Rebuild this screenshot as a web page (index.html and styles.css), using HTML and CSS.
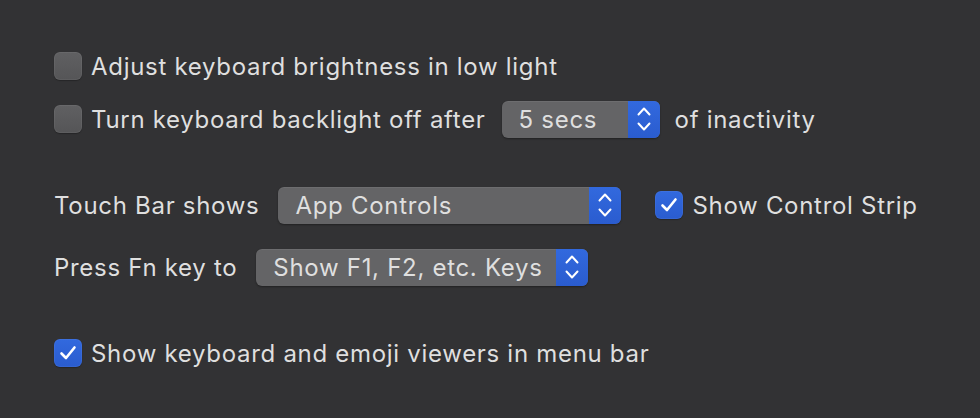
FILE: index.html
```html
<!DOCTYPE html>
<html>
<head>
    <title>Keyboard</title>
    <link rel="stylesheet" href="styles.css">
</head>
<body>
    <div class="pane">
        <div class="group">
            <div class="row">
                <span class="check"></span>
                <span class="label">Adjust keyboard brightness in low light</span>
            </div>
            <div class="row row-gap">
                <span class="check"></span>
                <span class="label">Turn keyboard backlight off after</span>
                <div class="popup popup-secs">
                    <span class="popup-text">5 secs</span>
                    <span class="popup-arrows">
                        <svg width="14" height="26" viewBox="0 0 14 26"><path d="M1.5 8.5 L7 2.5 L12.5 8.5 M1.5 17.5 L7 23.5 L12.5 17.5" fill="none" stroke="#fff" stroke-width="2" stroke-linecap="round" stroke-linejoin="round"/></svg>
                    </span>
                </div>
                <span class="label">of inactivity</span>
            </div>
        </div>

        <div class="group">
            <div class="row">
                <span class="label">Touch Bar shows</span>
                <div class="popup popup-bar">
                    <span class="popup-text">App Controls</span>
                    <span class="popup-arrows">
                        <svg width="14" height="26" viewBox="0 0 14 26"><path d="M1.5 8.5 L7 2.5 L12.5 8.5 M1.5 17.5 L7 23.5 L12.5 17.5" fill="none" stroke="#fff" stroke-width="2" stroke-linecap="round" stroke-linejoin="round"/></svg>
                    </span>
                </div>
                <span class="check checked strip">
                    <svg width="18" height="16" viewBox="0 0 18 16"><path d="M2.5 8.5 L7 13 L15.5 2.5" fill="none" stroke="#fff" stroke-width="2.6" stroke-linecap="round" stroke-linejoin="round"/></svg>
                </span>
                <span class="label">Show Control Strip</span>
            </div>
            <div class="row row-fn">
                <span class="label">Press Fn key to</span>
                <div class="popup popup-fn">
                    <span class="popup-text">Show F1, F2, etc. Keys</span>
                    <span class="popup-arrows">
                        <svg width="14" height="26" viewBox="0 0 14 26"><path d="M1.5 8.5 L7 2.5 L12.5 8.5 M1.5 17.5 L7 23.5 L12.5 17.5" fill="none" stroke="#fff" stroke-width="2" stroke-linecap="round" stroke-linejoin="round"/></svg>
                    </span>
                </div>
            </div>
        </div>

        <div class="group">
            <div class="row">
                <span class="check checked">
                    <svg width="18" height="16" viewBox="0 0 18 16"><path d="M2.5 8.5 L7 13 L15.5 2.5" fill="none" stroke="#fff" stroke-width="2.6" stroke-linecap="round" stroke-linejoin="round"/></svg>
                </span>
                <span class="label">Show keyboard and emoji viewers in menu bar</span>
            </div>
        </div>
    </div>
</body>
</html>
```

FILE: styles.css
```css
body {
    margin: 0;
    background: #323234;
    font-family: 'Inter', 'Liberation Sans', sans-serif;
    color: #dfdfdf;
    height: 418px;
    overflow: hidden;
}

.pane {
    padding: 47px 0 0 54px;
    display: flex;
    flex-direction: column;
    gap: 48px;
}

.row {
    display: flex;
    align-items: center;
    height: 38px;
}

.row-gap {
    margin-top: 15px;
}

.row-fn {
    margin-top: 24px;
}

.label,
.popup-text {
    font-size: 24px;
    letter-spacing: 0.7px;
    white-space: nowrap;
}

.check {
    width: 28px;
    height: 28px;
    box-sizing: border-box;
    border-radius: 6px;
    background: linear-gradient(#606062, #555557);
    box-shadow: inset 0 0 0 1px rgba(255, 255, 255, 0.05), 0 1px 1px rgba(0, 0, 0, 0.25);
    margin-right: 9px;
    flex-shrink: 0;
    display: flex;
    align-items: center;
    justify-content: center;
}

.check.checked {
    background: linear-gradient(#3269de, #2a5ccf);
}

.check.strip {
    margin-left: 34px;
}

.popup {
    display: flex;
    align-items: stretch;
    height: 37px;
    border-radius: 6px;
    background: #646466;
    box-shadow: 0 1px 2px rgba(0, 0, 0, 0.35), inset 0 1px 0 rgba(255, 255, 255, 0.06);
    overflow: hidden;
    margin: 0 15px 0 16px;
    flex-shrink: 0;
}

.popup-text {
    flex: 1;
    display: flex;
    align-items: center;
    padding-left: 17px;
}

.popup-arrows {
    width: 32px;
    display: flex;
    align-items: center;
    justify-content: center;
    background: linear-gradient(#3269de, #2a5ccf);
}

.popup-secs {
    width: 158px;
}

.popup-bar {
    width: 343px;
    margin-left: 19px;
    margin-right: 0;
}

.popup-fn {
    width: 332px;
    margin-left: 19px;
}
```
